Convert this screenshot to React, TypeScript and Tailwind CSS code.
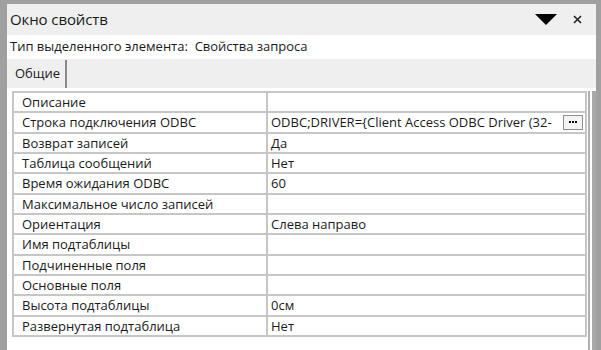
export default function App() {
  const rows: [string, string][] = [
    ['Описание', ''],
    ['Строка подключения ODBC', 'ODBC;DRIVER={Client Access ODBC Driver (32-'],
    ['Возврат записей', 'Да'],
    ['Таблица сообщений', 'Нет'],
    ['Время ожидания ODBC', '60'],
    ['Максимальное число записей', ''],
    ['Ориентация', 'Слева направо'],
    ['Имя подтаблицы', ''],
    ['Подчиненные поля', ''],
    ['Основные поля', ''],
    ['Высота подтаблицы', '0см'],
    ['Развернутая подтаблица', 'Нет'],
  ];

  return (
    <div
      className="w-[601px] h-[350px] bg-[#a0a0a0] pt-[4px] pl-[7px] pr-[5px] overflow-hidden text-[#1a1a1a]"
      style={{ fontFamily: '"Open Sans", "Noto Sans", sans-serif' }}
    >
      <div className="h-full bg-white flex flex-col">
        <div className="h-[31px] bg-[#efefef] flex items-center justify-between pl-[3px] pr-[14px] shrink-0">
          <span className="text-[15px] tracking-[-0.1px]">Окно свойств</span>
          <div className="flex items-center gap-[16px]">
            <svg width="22" height="12" viewBox="0 0 22 12">
              <polygon points="0,0 22,0 11,11" fill="#000" />
            </svg>
            <svg width="9" height="9" viewBox="0 0 9 9">
              <path d="M1 1 L8 8 M8 1 L1 8" stroke="#222" strokeWidth="1.6" />
            </svg>
          </div>
        </div>
        <div className="h-[24px] flex items-center pl-[3px] text-[13px] shrink-0">
          Тип выделенного элемента:&nbsp; Свойства запроса
        </div>
        <div className="h-[29px] bg-[#efefef] flex items-end shrink-0">
          <div className="h-[28px] ml-[1px] pl-[7px] pr-[5px] border-r-2 border-[#8a8a8a] flex items-center text-[13px]">
            Общие
          </div>
        </div>
        <div className="flex-1 flex pt-[3px]">
          <div className="ml-[5px] w-[577px] self-start border-2 border-b-0 border-[#c6c6c6]">
            {rows.map(([label, value], i) => (
              <div key={i} className="flex h-[20.33px] border-b-2 border-[#c6c6c6] text-[13px] leading-none">
                <div className="w-[254px] shrink-0 border-r-2 border-[#c6c6c6] pl-[8px] pt-[1px] flex items-center whitespace-nowrap">
                  {label}
                </div>
                <div className="flex-1 min-w-0 pl-[3px] pr-[2px] flex items-center">
                  <span className="flex-1 whitespace-nowrap pt-[1px]">{value}</span>
                  {i === 1 && (
                    <span className="shrink-0 w-[20px] h-[15px] border border-[#8e8e8e] bg-[#f4f4f4] flex items-center justify-center gap-[1px]">
                      <span className="w-[2px] h-[2px] bg-black" />
                      <span className="w-[2px] h-[2px] bg-black" />
                      <span className="w-[2px] h-[2px] bg-black" />
                    </span>
                  )}
                </div>
              </div>
            ))}
          </div>
          <div className="ml-[1px] w-[3px] border-l-2 border-[#b0b0b0]" />
          <div className="ml-[1px] w-[4px] bg-[#a8a8a8]" />
        </div>
      </div>
    </div>
  );
}
